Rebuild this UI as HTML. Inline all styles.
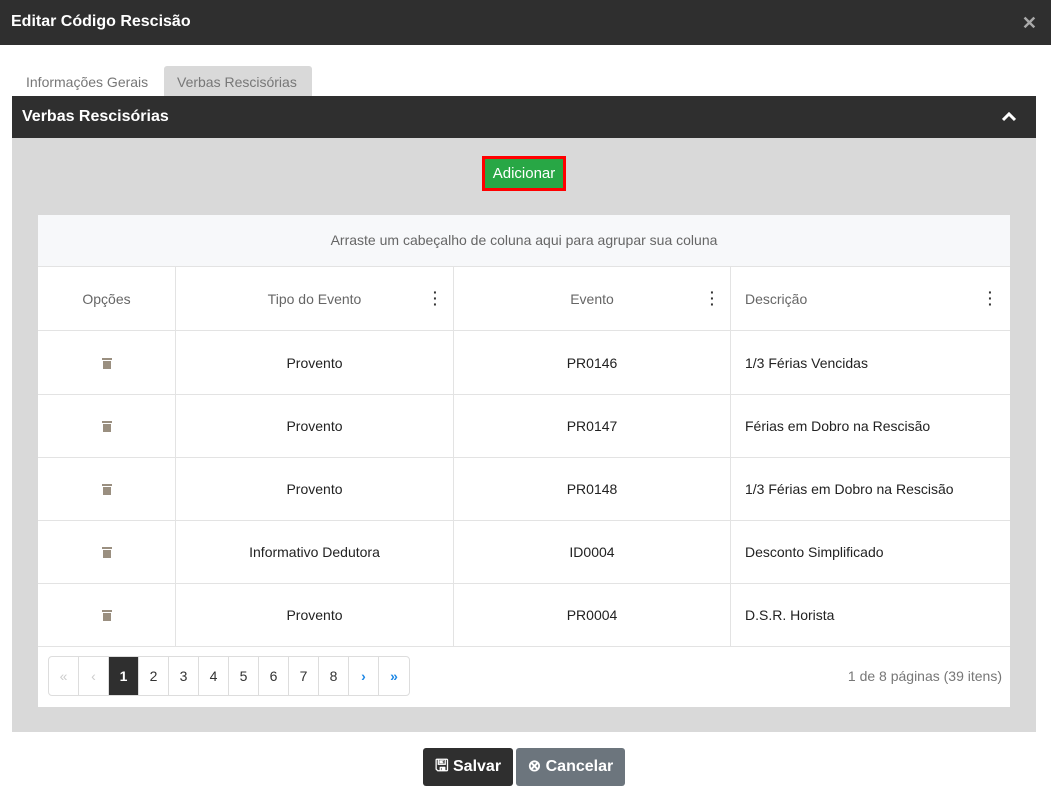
<!DOCTYPE html><html><head><meta charset="utf-8"><style>
*{box-sizing:border-box;margin:0;padding:0}
body{width:1051px;height:800px;background:#fff;font-family:"Liberation Sans",sans-serif;position:relative;overflow:hidden;font-size:14px;color:#222}
.a{position:absolute}
.hdr{left:0;top:0;width:1051px;height:45px;background:#2f2f2f;color:#fff;font-weight:bold;font-size:16px;padding:13px 11px}
.x{right:14px;top:13px;color:#aaa;font-size:18px;font-weight:bold}
.tab{top:66px;height:30px;color:#777;font-size:14px;padding:8px 13px}
.ph{left:12px;top:96px;width:1024px;height:42px;background:#2f2f2f;color:#fff;font-weight:bold;font-size:16px;padding:12px 10px}
.body{left:12px;top:138px;width:1024px;height:594px;background:#d9d9d9}
.add{left:482px;top:156px;width:84px;height:35px;border:3px solid #f00;background:#28a745;color:#fff;font-size:15px;text-align:center;line-height:29px}
.grid{left:38px;top:215px;width:972px;height:492px;background:#fff}
.grp{left:0;top:0;width:972px;height:52px;background:#f7f8fa;border-bottom:1px solid #e3e3e3;color:#666;font-size:14px;text-align:center;line-height:50px}
.row{left:0;width:972px;border-bottom:1px solid #e3e3e3}
.c{position:absolute;top:0;height:100%;display:flex;align-items:center;justify-content:center;border-right:1px solid #e3e3e3}
.c1{left:0;width:138px}.c2{left:138px;width:278px}.c3{left:416px;width:277px}.c4{left:693px;width:277px;justify-content:flex-start;padding-left:14px;border-right:none}
.th{color:#666}
.dots{position:absolute;right:16px;top:22px;font-weight:bold;color:#333;font-size:14px;line-height:6px;width:4px;text-align:center}
.pg{left:10px;top:441px;height:40px;border:1px solid #ddd;border-radius:4px;display:flex;overflow:hidden}
.pg div{width:30px;height:38px;border-right:1px solid #ddd;text-align:center;line-height:38px;color:#333}
.pg div:last-child{border-right:none}
.btn{top:748px;height:38px;border-radius:3px;color:#fff;font-weight:bold;font-size:16px;line-height:38px;text-align:center}
</style></head><body>
<div class="a hdr">Editar Código Rescisão</div><div class="a x">✕</div>
<div class="a tab" style="left:13px">Informações Gerais</div>
<div class="a tab" style="left:164px;width:148px;background:#d9d9d9;border-radius:3px 3px 0 0">Verbas Rescisórias</div>
<div class="a ph">Verbas Rescisórias<svg class="a" style="right:20px;top:16px" width="14" height="10" viewBox="0 0 14 10"><path d="M1 8L7 2L13 8" stroke="#fff" stroke-width="3" fill="none"/></svg></div>
<div class="a body"></div>
<div class="a add">Adicionar</div>
<div class="a grid">
<div class="a grp">Arraste um cabeçalho de coluna aqui para agrupar sua coluna</div>
<div class="a row th" style="top:52px;height:64px"><div class="c c1">Opções</div><div class="c c2">Tipo do Evento<span class="dots">·<br>·<br>·</span></div><div class="c c3">Evento<span class="dots">·<br>·<br>·</span></div><div class="c c4">Descrição<span class="dots">·<br>·<br>·</span></div></div>
<div class="a row" style="top:116px;height:64px"><div class="c c1"><svg width="10" height="12"><rect x="0" y="1" width="10" height="2" fill="#9a8f80"/><rect x="1" y="4" width="8" height="8" fill="#9a8f80"/></svg></div><div class="c c2">Provento</div><div class="c c3">PR0146</div><div class="c c4">1/3 Férias Vencidas</div></div>
<div class="a row" style="top:180px;height:63px"><div class="c c1"><svg width="10" height="12"><rect x="0" y="1" width="10" height="2" fill="#9a8f80"/><rect x="1" y="4" width="8" height="8" fill="#9a8f80"/></svg></div><div class="c c2">Provento</div><div class="c c3">PR0147</div><div class="c c4">Férias em Dobro na Rescisão</div></div>
<div class="a row" style="top:243px;height:63px"><div class="c c1"><svg width="10" height="12"><rect x="0" y="1" width="10" height="2" fill="#9a8f80"/><rect x="1" y="4" width="8" height="8" fill="#9a8f80"/></svg></div><div class="c c2">Provento</div><div class="c c3">PR0148</div><div class="c c4">1/3 Férias em Dobro na Rescisão</div></div>
<div class="a row" style="top:306px;height:63px"><div class="c c1"><svg width="10" height="12"><rect x="0" y="1" width="10" height="2" fill="#9a8f80"/><rect x="1" y="4" width="8" height="8" fill="#9a8f80"/></svg></div><div class="c c2">Informativo Dedutora</div><div class="c c3">ID0004</div><div class="c c4">Desconto Simplificado</div></div>
<div class="a row" style="top:369px;height:63px"><div class="c c1"><svg width="10" height="12"><rect x="0" y="1" width="10" height="2" fill="#9a8f80"/><rect x="1" y="4" width="8" height="8" fill="#9a8f80"/></svg></div><div class="c c2">Provento</div><div class="c c3">PR0004</div><div class="c c4">D.S.R. Horista</div></div>
<div class="a pg"><div style="color:#ccc">«</div><div style="color:#ccc">‹</div><div style="background:#2f2f2f;color:#fff;font-weight:bold">1</div><div>2</div><div>3</div><div>4</div><div>5</div><div>6</div><div>7</div><div>8</div><div style="color:#1e88e5;font-weight:bold">›</div><div style="color:#1e88e5;font-weight:bold">»</div></div>
<div class="a" style="right:8px;top:453px;color:#777">1 de 8 páginas (39 itens)</div>
</div>
<div class="a btn" style="left:423px;width:90px;background:#2f2f2f">🖫 Salvar</div>
<div class="a btn" style="left:516px;width:109px;background:#6c757d">⊗ Cancelar</div>
</body></html>
